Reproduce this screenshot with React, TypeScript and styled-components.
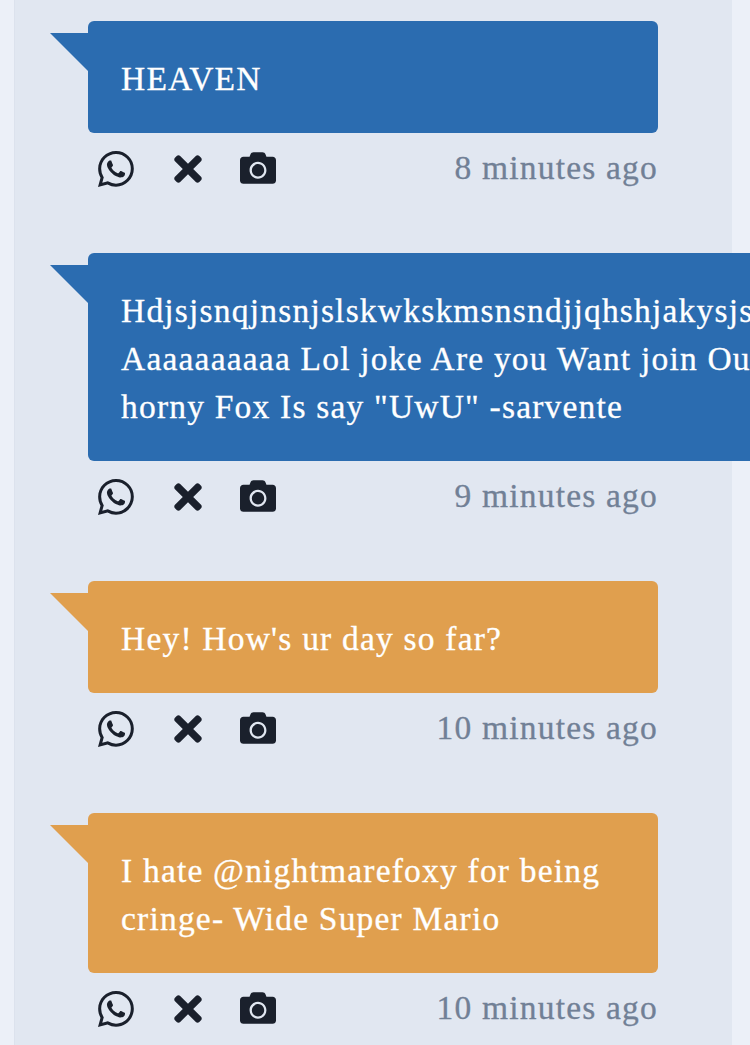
import React from 'react';
import styled, { createGlobalStyle } from 'styled-components';
import { FaTimes, FaCamera } from 'react-icons/fa';
import { BsWhatsapp } from 'react-icons/bs';

const GlobalStyle = createGlobalStyle`
  html, body {
    margin: 0;
    padding: 0;
    background: #ecf0f8;
    overflow: hidden;
  }
  body {
    font-family: "Liberation Serif", "DejaVu Serif", serif;
  }
`;

const Column = styled.main`
  box-sizing: border-box;
  width: 718px;
  height: 1045px;
  margin-left: 14px;
  padding: 21px 74px 0 36px;
  background: #e1e7f1;
  border-left: 1px solid #dce2ed;
  display: flex;
  flex-direction: column;
  gap: 60px;
`;

const Post = styled.article`
  display: flex;
  flex-direction: column;
  gap: 12px;
`;

const Bubble = styled.div<{ $tone: 'blue' | 'orange' }>`
  position: relative;
  box-sizing: border-box;
  margin-left: 37px;
  min-width: 570px;
  width: max-content;
  padding: 34px 33px 30px;
  border-radius: 6px;
  background: ${(p) => (p.$tone === 'blue' ? '#2b6cb0' : '#e09f4e')};
  color: #fff;
  font-size: 33.5px;
  letter-spacing: 1.2px;
  line-height: 48px;
  -webkit-text-stroke: 0.3px #fff;

  &::before {
    content: '';
    position: absolute;
    left: -38px;
    top: 12px;
    border-top: 38px solid ${(p) => (p.$tone === 'blue' ? '#2b6cb0' : '#e09f4e')};
    border-left: 38px solid transparent;
  }
`;

const Line = styled.div`
  white-space: nowrap;
`;

const Meta = styled.div`
  margin-left: 47px;
  width: 559px;
  height: 48px;
  display: flex;
  align-items: center;
  color: #1a202c;
`;

const Icons = styled.div`
  display: flex;
  align-items: center;
  flex: 1;

  svg {
    display: block;
  }
`;

const Chat = styled(BsWhatsapp)`
  font-size: 36px;
  margin-right: 34px;
`;

const Cross = styled(FaTimes)`
  font-size: 40px;
  margin-right: 32px;
`;

const Camera = styled(FaCamera)`
  font-size: 36px;
  margin-top: -3px;
`;

const Time = styled.time`
  color: #718096;
  font-size: 33.5px;
  letter-spacing: 1.2px;
  -webkit-text-stroke: 0.3px #718096;
  margin: -3px -1px 0 0;
`;

const posts: { tone: 'blue' | 'orange'; lines: string[]; time: string }[] = [
  { tone: 'blue', lines: ['HEAVEN'], time: '8 minutes ago' },
  {
    tone: 'blue',
    lines: [
      'Hdjsjsnqjnsnjslskwkskmsnsndjjqhshjakysjsjwnsjs',
      'Aaaaaaaaaa Lol joke Are you Want join Our',
      'horny Fox Is say "UwU" -sarvente',
    ],
    time: '9 minutes ago',
  },
  { tone: 'orange', lines: ["Hey! How's ur day so far?"], time: '10 minutes ago' },
  {
    tone: 'orange',
    lines: ['I hate @nightmarefoxy for being', 'cringe- Wide Super Mario'],
    time: '10 minutes ago',
  },
];

export default function App() {
  return (
    <>
      <GlobalStyle />
      <Column>
        {posts.map((post, index) => (
          <Post key={index}>
            <Bubble $tone={post.tone}>
              {post.lines.map((line) => (
                <Line key={line}>{line}</Line>
              ))}
            </Bubble>
            <Meta>
              <Icons>
                <Chat />
                <Cross />
                <Camera />
              </Icons>
              <Time>{post.time}</Time>
            </Meta>
          </Post>
        ))}
      </Column>
    </>
  );
}
